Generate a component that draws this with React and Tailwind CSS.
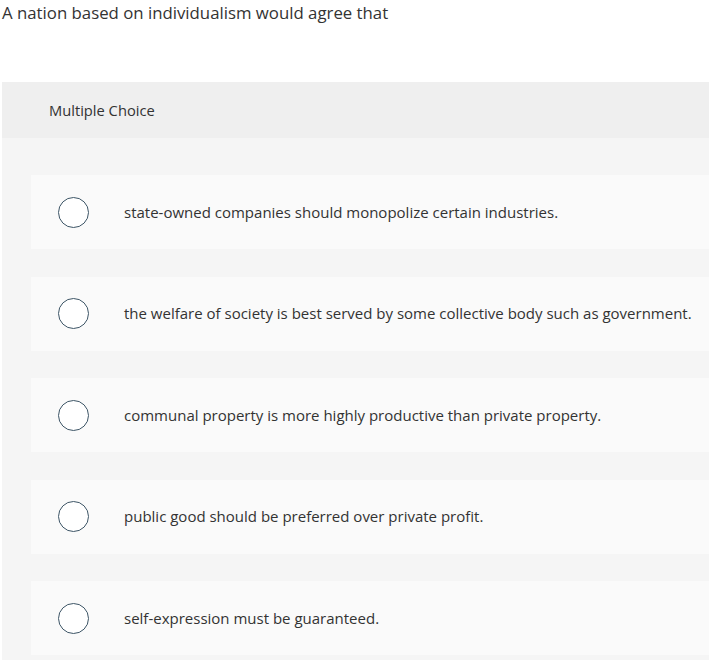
const options = [
  "state-owned companies should monopolize certain industries.",
  "the welfare of society is best served by some collective body such as government.",
  "communal property is more highly productive than private property.",
  "public good should be preferred over private profit.",
  "self-expression must be guaranteed.",
];

export default function App() {
  return (
    <div className="w-[710px] h-[660px] overflow-hidden bg-white text-[#333] font-['Open_Sans',sans-serif]">
      {/* Question */}
      <p className="pl-[2px] pt-[1px] text-[16.8px] leading-[23px]">
        A nation based on individualism would agree that
      </p>

      {/* Answer box */}
      <div className="mt-[58px] ml-[2px] mr-px">
        <div className="h-[56px] bg-[#efefef] flex items-center pl-[47px] text-[14.7px]">
          Multiple Choice
        </div>
        <div className="bg-[#f5f5f5] pt-[37px] pl-[29px] flex flex-col gap-[27.5px] pb-[40px]">
          {options.map((text) => (
            <div
              key={text}
              className="h-[74px] bg-[#fafafa] flex items-center pl-[27px]"
            >
              <span className="w-[31px] h-[31px] rounded-full border-[1.5px] border-[#3d5566] bg-white shrink-0" />
              <span className="ml-[35px] text-[15px] text-[#333]">{text}</span>
            </div>
          ))}
        </div>
      </div>
    </div>
  );
}
